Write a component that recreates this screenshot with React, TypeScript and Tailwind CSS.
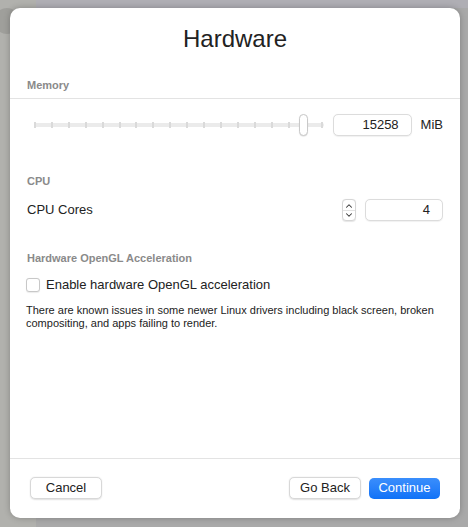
import { ChevronUp, ChevronDown } from "lucide-react";

const font = { fontFamily: '"Liberation Sans", Arial, sans-serif' };

function SectionLabel({ children }: { children: React.ReactNode }) {
  return (
    <p className="text-[11px] font-bold leading-[14px] text-[#8a8a8a]">{children}</p>
  );
}

function Slider() {
  const ticks = Array.from({ length: 18 });
  return (
    <div className="relative h-[22px] flex-1">
      <div className="absolute left-0 right-0 top-[9px] h-[4px] rounded-full bg-[#ebebeb]" />
      <div className="absolute inset-x-0 top-[8px] flex h-[6px] justify-between">
        {ticks.map((_, i) => (
          <span key={i} className="h-[6px] w-[2px] bg-[#dadada]" />
        ))}
      </div>
      <div className="absolute left-[265px] top-0 h-[22px] w-[9px] rounded-full border border-[#c9c9c9] bg-white shadow-[0_0.5px_1px_rgba(0,0,0,0.15)]" />
    </div>
  );
}

function Field({ value, width }: { value: string; width: string }) {
  return (
    <div
      className={`${width} flex h-[22px] items-center justify-end rounded-[5px] border border-[#dcdcdc] bg-white pr-[12px] text-[13px] text-[#222] shadow-[0_0.5px_1px_rgba(0,0,0,0.06)]`}
    >
      {value}
    </div>
  );
}

function Button({ children, primary }: { children: React.ReactNode; primary?: boolean }) {
  return (
    <button
      className={
        primary
          ? "flex h-[21px] w-[71px] items-center justify-center rounded-[5px] bg-gradient-to-b from-[#3a8efc] to-[#0f72f7] text-[13px] text-white"
          : "flex h-[22px] w-[72px] items-center justify-center rounded-[5px] border border-[#d8d8d8] bg-white text-[13px] text-[#222] shadow-[0_0.5px_1.5px_rgba(0,0,0,0.12)]"
      }
    >
      {children}
    </button>
  );
}

export default function App() {
  return (
    <div style={font} className="relative flex h-[527px] w-[468px] overflow-hidden bg-[#a9a9a9]">
      {/* backdrop bits */}
      <div className="absolute left-0 top-0 h-[527px] w-[36px] bg-[#b1b1ad]" />
      <div className="absolute left-[36px] top-0 h-[8px] w-[432px] bg-[#afaeb4]" />
      <div className="absolute left-[-6px] top-[8px] h-[26px] w-[26px] rounded-full bg-[#9f9f9b]" />

      <div className="relative ml-[10px] mt-[8px] flex h-[510px] w-[450px] flex-col rounded-[10px] bg-white shadow-[0_0_6px_rgba(0,0,0,0.25)]">
        <h1 className="pt-[17px] text-center text-[24px] leading-[28px] text-[#222]">Hardware</h1>

        <div className="mt-[25px] px-[17px]">
          <SectionLabel>Memory</SectionLabel>
        </div>
        <div className="mt-[6px] h-px bg-[#e3e3e3]" />

        <div className="mt-[15px] flex items-center pl-[24px] pr-[17px]">
          <Slider />
          <div className="ml-[9px]">
            <Field value="15258" width="w-[79px]" />
          </div>
          <span className="ml-[9px] text-[13px] text-[#222]">MiB</span>
        </div>

        <div className="mt-[38px] px-[17px]">
          <SectionLabel>CPU</SectionLabel>
        </div>

        <div className="mt-[11px] flex items-center pl-[17px] pr-[17px]">
          <span className="flex-1 text-[13px] text-[#222]">CPU Cores</span>
          <div className="flex h-[22px] w-[14px] flex-col items-center justify-center rounded-[4px] border border-[#d6d6d6] bg-white text-[#333] shadow-[0_0.5px_1px_rgba(0,0,0,0.1)]">
            <ChevronUp size={10} strokeWidth={2.5} className="-mb-[1px]" />
            <div className="h-px w-full bg-[#e2e2e2]" />
            <ChevronDown size={10} strokeWidth={2.5} className="-mt-[1px]" />
          </div>
          <div className="ml-[9px]">
            <Field value="4" width="w-[78px]" />
          </div>
        </div>

        <div className="mt-[30px] px-[17px]">
          <SectionLabel>Hardware OpenGL Acceleration</SectionLabel>
        </div>

        <div className="mt-[12px] flex items-center px-[16px]">
          <span className="h-[14px] w-[14px] rounded-[3px] border border-[#c8c8c8] bg-white shadow-[0_0.5px_1px_rgba(0,0,0,0.08)]" />
          <span className="ml-[6px] text-[13px] leading-[16px] text-[#222]">
            Enable hardware OpenGL acceleration
          </span>
        </div>

        <p className="mt-[11px] px-[16px] text-[11px] leading-[13px] text-[#222]">
          There are known issues in some newer Linux drivers including black screen, broken
          compositing, and apps failing to render.
        </p>

        <div className="flex-1" />
        <div className="h-px bg-[#e3e3e3]" />
        <div className="flex h-[59px] items-center px-[20px] pb-[1px]">
          <Button>Cancel</Button>
          <div className="flex-1" />
          <Button>Go Back</Button>
          <div className="ml-[8px]">
            <Button primary>Continue</Button>
          </div>
        </div>
      </div>
    </div>
  );
}
